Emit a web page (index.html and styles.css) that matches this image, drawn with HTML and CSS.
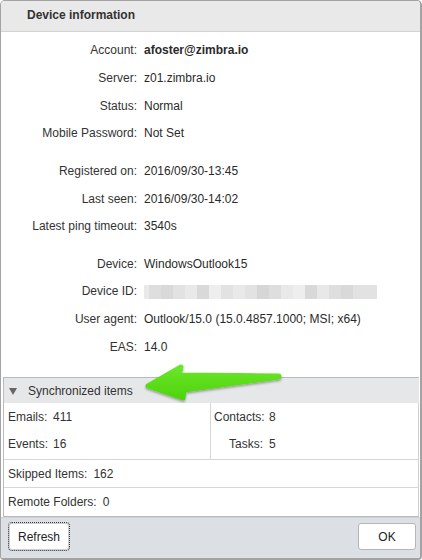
FILE: index.html
```html
<!DOCTYPE html>
<html>
<head>
<meta charset="utf-8">
<link rel="stylesheet" href="styles.css">
</head>
<body>
<div class="dialog">
  <div class="titlebar">Device information</div>
  <div class="content">
    <div class="info">
      <div class="group">
        <div class="lbl">Account:</div><div class="val strong">afoster@zimbra.io</div>
        <div class="lbl">Server:</div><div class="val">z01.zimbra.io</div>
        <div class="lbl">Status:</div><div class="val">Normal</div>
        <div class="lbl">Mobile Password:</div><div class="val">Not Set</div>
      </div>
      <div class="group">
        <div class="lbl">Registered on:</div><div class="val">2016/09/30-13:45</div>
        <div class="lbl">Last seen:</div><div class="val">2016/09/30-14:02</div>
        <div class="lbl">Latest ping timeout:</div><div class="val">3540s</div>
      </div>
      <div class="group">
        <div class="lbl">Device:</div><div class="val">WindowsOutlook15</div>
        <div class="lbl">Device ID:</div>
        <div class="val"><span class="blur"><i></i><i></i><i></i><i></i><i></i><i></i><i></i><i></i><i></i><i></i><i></i><i></i><i></i><i></i><i></i><i></i><i></i><i></i><i></i><i></i></span></div>
        <div class="lbl">User agent:</div><div class="val">Outlook/15.0 (15.0.4857.1000; MSI; x64)</div>
        <div class="lbl">EAS:</div><div class="val">14.0</div>
      </div>
    </div>

    <div class="sync">
      <div class="sync-head"><span class="tri"></span><span>Synchronized items</span></div>
      <div class="sync-grid">
        <div class="col left">
          <div class="pair"><span class="k">Emails:</span><span class="v">411</span></div>
          <div class="pair"><span class="k">Events:</span><span class="v">16</span></div>
        </div>
        <div class="col right">
          <div class="pair"><span class="k">Contacts:</span><span class="v">8</span></div>
          <div class="pair"><span class="k">Tasks:</span><span class="v">5</span></div>
        </div>
      </div>
      <div class="sync-row"><span>Skipped Items:</span><span>162</span></div>
      <div class="sync-row last"><span>Remote Folders:</span><span>0</span></div>
    </div>
  </div>
  <div class="footer">
    <button class="btn focus">Refresh</button>
    <button class="btn ok">OK</button>
  </div>

  <svg class="arrow" width="422" height="560" viewBox="0 0 422 560">
    <defs>
      <linearGradient id="ag" x1="0" y1="0" x2="0" y2="1">
        <stop offset="0" stop-color="#6ae62a"/>
        <stop offset="1" stop-color="#4fd40c"/>
      </linearGradient>
      <filter id="sh" x="-10%" y="-20%" width="120%" height="150%">
        <feDropShadow dx="0" dy="1.5" stdDeviation="1.2" flood-color="#000" flood-opacity="0.35"/>
      </filter>
    </defs>
    <polygon filter="url(#sh)" fill="url(#ag)" stroke="url(#ag)" stroke-width="5" stroke-linejoin="round"
      points="148,386 181,367 179,375 279,376 279,377 184,390 183,398"/>
  </svg>
</div>
</body>
</html>
```

FILE: styles.css
```css
* { box-sizing: border-box; }
html, body { margin: 0; padding: 0; background: #ffffff; }
body {
  font-family: "Liberation Sans", Arial, Helvetica, sans-serif;
  font-size: 12px;
  color: #333;
}
.dialog {
  position: relative;
  width: 422px;
  height: 560px;
  border: 1px solid #a3a3a3;
  border-bottom-width: 2px;
  border-right-width: 2px;
  border-radius: 5px 5px 4px 4px;
  overflow: hidden;
  display: flex;
  flex-direction: column;
  background: #fff;
}
.titlebar {
  height: 31px;
  flex: none;
  background: #e9e9e9;
  border-bottom: 1px solid #d4d4d4;
  padding-left: 26px;
  line-height: 29px;
  font-weight: bold;
  color: #333;
}
.content {
  flex: 1;
  display: flex;
  flex-direction: column;
  background: #fff;
}
.info {
  padding-top: 4.5px;
  display: flex;
  flex-direction: column;
  gap: 9.8px;
}
.group {
  display: grid;
  grid-template-columns: 136px 1fr;
  column-gap: 7px;
  grid-auto-rows: 27.7px;
  align-items: center;
}
.lbl { text-align: right; white-space: nowrap; }
.val { white-space: nowrap; color: #2a2a2a; }
.strong { font-weight: bold; }
.blur {
  display: flex;
  width: 233px;
  height: 14px;
  margin-top: 1px;
}
.blur i { flex: 1; height: 100%; background: #e2e2e2; }
.blur i:nth-child(1) { background: #f1ece6; flex: 0.4; }
.blur i:nth-child(3n) { background: #d9d9d9; }
.blur i:nth-child(4n+1) { background: #e9e9e9; }
.blur i:nth-child(5n+2) { background: #dedede; }
.blur i:nth-child(7n) { background: #eeeeee; }
.blur i:nth-child(11) { background: #d6d6d6; }
.blur i:nth-child(16) { background: #e8e8e8; }

.sync {
  margin: 16.5px 1px 0 2px;
  border: 1px solid #b9b9b9;
  border-right-color: #d0d0d0;
}
.sync-head {
  height: 25px;
  background: #e6e7e9;
  display: flex;
  align-items: center;
  padding-left: 5px;
  margin-right: -1px;
  color: #333;
}
.tri {
  width: 0;
  height: 0;
  border-left: 4px solid transparent;
  border-right: 4px solid transparent;
  border-top: 7px solid #666;
  margin-right: 11px;
  margin-top: 1px;
}
.sync-grid {
  display: grid;
  grid-template-columns: 207px 1fr;
  border-bottom: 1px solid #d6d6d6;
}
.col { display: flex; flex-direction: column; padding: 0 0 2px; }
.col.left { border-right: 1px solid #d6d6d6; padding-left: 4px; }
.col.right { padding-left: 3px; }
.pair { height: 27px; display: flex; align-items: center; gap: 6px; }
.col.left .k { width: 39px; text-align: right; }
.col.right .k { width: 49px; text-align: right; }
.sync-row {
  height: 28px;
  display: flex;
  align-items: center;
  gap: 6px;
  padding-left: 4px;
  border-bottom: 1px solid #d6d6d6;
}
.sync-row.last { border-bottom: none; height: 28px; }

.footer {
  height: 42px;
  flex: none;
  background: #dcdfe4;
  border-top: 1px solid #cfd2d7;
  display: flex;
  justify-content: space-between;
  align-items: flex-start;
  padding: 5px 4px 0 8px;
}
.btn {
  font-family: "Liberation Sans", Arial, Helvetica, sans-serif;
  font-size: 12px;
  color: #222;
  background: #fff;
  border: 1px solid #b5b5b5;
  border-radius: 3px;
  height: 27px;
  padding: 0;
}
.btn.focus {
  width: 60px;
  border-color: #cfcfcf;
  outline: 1px dotted #333;
  outline-offset: 0;
}
.btn.ok { width: 58px; }
.arrow {
  position: absolute;
  left: -1px;
  top: -1px;
  pointer-events: none;
}
```
